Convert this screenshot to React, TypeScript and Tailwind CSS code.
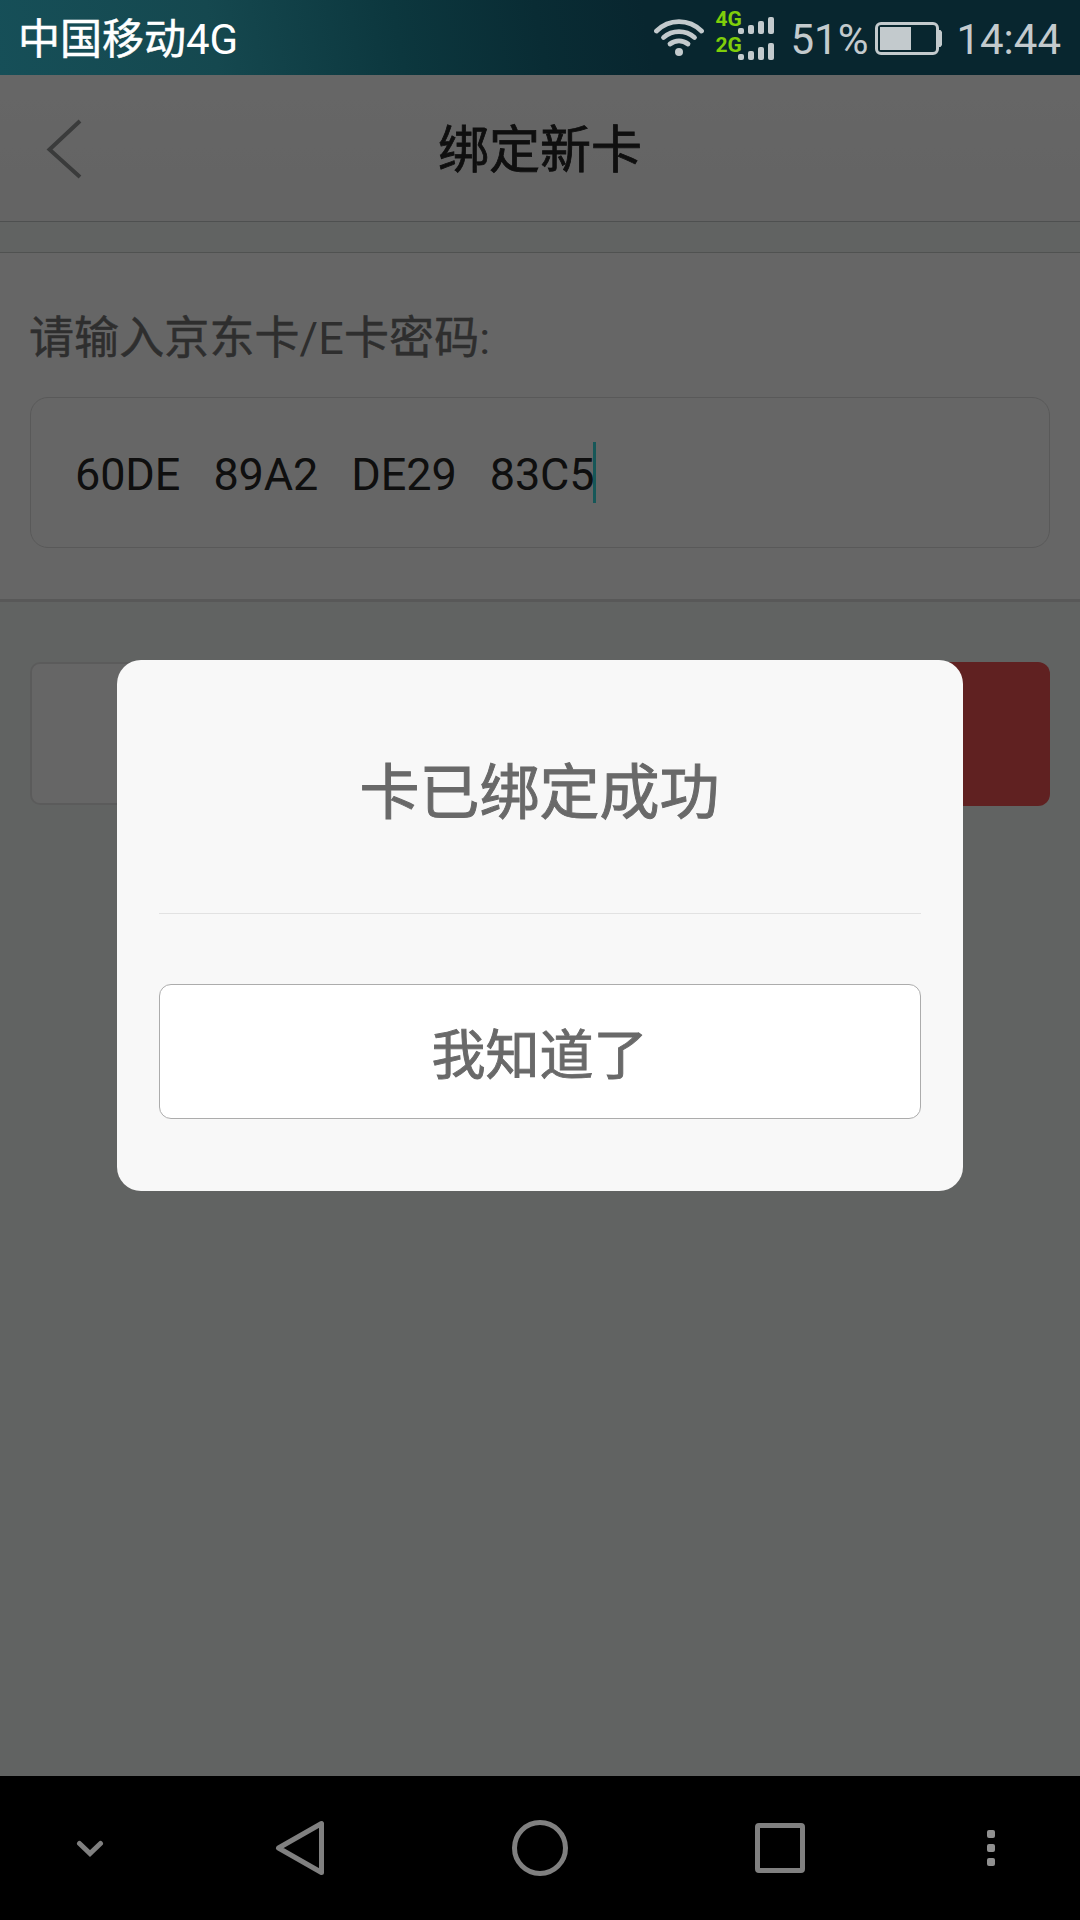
import type { ReactNode } from "react";

const CARD_CODE = ["60DE", "89A2", "DE29", "83C5"];

const SIGNALS = [
  { id: "sim1", name: "4G" },
  { id: "sim2", name: "2G" },
];

const WifiIcon = () => (
  <svg width="50" height="40" viewBox="0 0 50 40" fill="none">
    <g stroke="#c3cacd" strokeWidth="4.8" strokeLinecap="round">
      <path d="M2.5 13A31.5 31.5 0 0 1 47.5 13" />
      <path d="M9.5 19.5A23.5 23.5 0 0 1 40.5 19.5" />
      <path d="M16 26A14.5 14.5 0 0 1 34 26" />
    </g>
    <circle cx="25" cy="34" r="4" fill="#c3cacd" />
  </svg>
);

const SignalIcon = () => (
  <svg width="36" height="17" viewBox="0 0 36 17" fill="#c3cacd">
    <rect x="0" y="11" width="6" height="6" rx="2" />
    <rect x="10" y="8" width="6" height="9" rx="2" />
    <rect x="20" y="4" width="6" height="13" rx="2" />
    <rect x="30" y="0" width="6" height="17" rx="2" />
  </svg>
);

const BatteryIcon = () => (
  <svg width="67" height="33" viewBox="0 0 67 33" fill="none">
    <rect x="1.5" y="1.5" width="61" height="30" rx="4.5" stroke="#c3cacd" strokeWidth="3" />
    <rect x="5" y="5" width="31" height="23" fill="#c3cacd" />
    <path d="M63 8h2.5l1.500 2v13l-1.500 2H63z" fill="#c3cacd" />
  </svg>
);

const StatusBar = () => (
  <div className="flex h-[75px] items-center justify-between bg-[linear-gradient(80deg,#164f58_0%,#15484f_20%,#0c373e_37%,#092c34_50%,#08262f_60%,#08262f_100%)] pr-[19px] pl-[18px] text-[42px] leading-[70px] text-[#c3cacd]">
    <p className="pt-[4px] text-white">
      <span className="[-webkit-text-stroke:0.5px]">中国移动</span>4G
    </p>
    <div className="flex h-full items-center">
      <WifiIcon />
      <div className="ml-[11px] flex flex-col pb-[7px]">
        {SIGNALS.map((signal) => (
          <div key={signal.id} className="flex h-[26px] items-end">
            <span className="w-[23px] text-[21px] leading-[30px] font-bold text-[#7fce0a]">
              {signal.name}
            </span>
            <SignalIcon />
          </div>
        ))}
      </div>
      <span className="ml-[16px] pt-[4px]">51%</span>
      <div className="ml-[7px] pt-[2px]">
        <BatteryIcon />
      </div>
      <span className="ml-[14px] pt-[4px]">14:44</span>
    </div>
  </div>
);

const Header = () => (
  <header className="grid h-[147px] grid-cols-[1fr_auto_1fr] items-center border-b border-[#c4c8c7] bg-linear-to-b from-white to-[#f9f9f9] px-[46px]">
    <svg className="mt-[2px]" width="36" height="60" viewBox="0 0 36 60" fill="none">
      <path d="M34 2L3.500 30.500L34 58" stroke="#919394" strokeWidth="4" />
    </svg>
    <h1 className="pt-[5px] text-[51px] leading-[72px] text-[#262626] [-webkit-text-stroke:0.8px]">
      绑定新卡
    </h1>
  </header>
);

const CardForm = () => (
  <section className="mt-[30px] h-[350px] border-t border-b-[3px] border-t-[#c8cccb] border-b-[#dcdcdc] bg-white px-[30px] pt-[54px]">
    <p className="-ml-px text-[45px] leading-[64px] tracking-[0.1px] text-[#737373]">
      <span className="[-webkit-text-stroke:0.5px]">请输入京东卡</span>/E
      <span className="[-webkit-text-stroke:0.5px]">卡密码</span>:
    </p>
    <div className="mt-[26px] flex h-[151px] items-center rounded-[18px] border border-[#dedede] pl-[44px] text-[45px] text-[#262626]">
      <span className="pt-[4px] tracking-[-0.11px] whitespace-pre">{CARD_CODE.join("   ")}</span>
      <i className="-ml-px h-[61px] w-[3px] bg-[#37d9dd]" />
    </div>
  </section>
);

const Modal = ({ children }: { children: ReactNode }) => (
  <div className="absolute inset-x-0 top-[75px] bottom-[144px] bg-black/60 px-[117px] pt-[585px]">
    <div className="h-[531px] rounded-[24px] bg-[#f8f8f8] px-[42px] text-center text-[#696969]">
      {children}
    </div>
  </div>
);

const NavBar = () => (
  <nav className="flex h-36 items-center bg-black pl-[76px]">
    <svg className="mt-px" width="28" height="18" viewBox="0 0 28 18" fill="none">
      <path d="M3.500 3.500L14 13.500L24.500 3.500" stroke="#808080" strokeWidth="5" strokeLinecap="round" />
    </svg>
    <svg className="ml-[171px]" width="50" height="56" viewBox="0 0 50 56" fill="none">
      <path d="M3.500 28L46.500 3.500V52.500Z" stroke="#808080" strokeWidth="5" strokeLinejoin="round" />
    </svg>
    <i className="ml-[187px] size-14 rounded-full border-[5px] border-[#808080]" />
    <i className="ml-[187px] size-[50px] rounded-[4px] border-[5px] border-[#808080]" />
    <div className="ml-[182px] flex flex-col gap-[6px]">
      <i className="size-2 rounded-[2px] bg-[#909090]" />
      <i className="size-2 rounded-[2px] bg-[#909090]" />
      <i className="size-2 rounded-[2px] bg-[#909090]" />
    </div>
  </nav>
);

export default function App() {
  return (
    <div className="relative flex h-[1920px] w-[1080px] flex-col overflow-hidden bg-[#f2f8f5] font-[Roboto,'Noto_Sans_CJK_SC',sans-serif]">
      <StatusBar />
      <main className="flex-1">
        <Header />
        <CardForm />
        <div className="mt-[60px] flex justify-between px-[30px]">
          <button className="h-[143px] w-[495px] rounded-[10px] border-2 border-[#e4e4e4] bg-white" />
          <button className="h-[144px] w-[495px] rounded-[12px] bg-[#f05353]" />
        </div>
      </main>
      <NavBar />
      <Modal>
        <h2 className="h-[253px] pt-[90px] pr-px text-[60px] leading-[88px] [-webkit-text-stroke:1px]">
          卡已绑定成功
        </h2>
        <hr className="border-[#e2e2e2]" />
        <button className="mt-[70px] h-[135px] w-full rounded-[12px] border border-[#acacac] bg-white pt-[10px] pr-px text-[54px] [-webkit-text-stroke:0.9px]">
          我知道了
        </button>
      </Modal>
    </div>
  );
}
